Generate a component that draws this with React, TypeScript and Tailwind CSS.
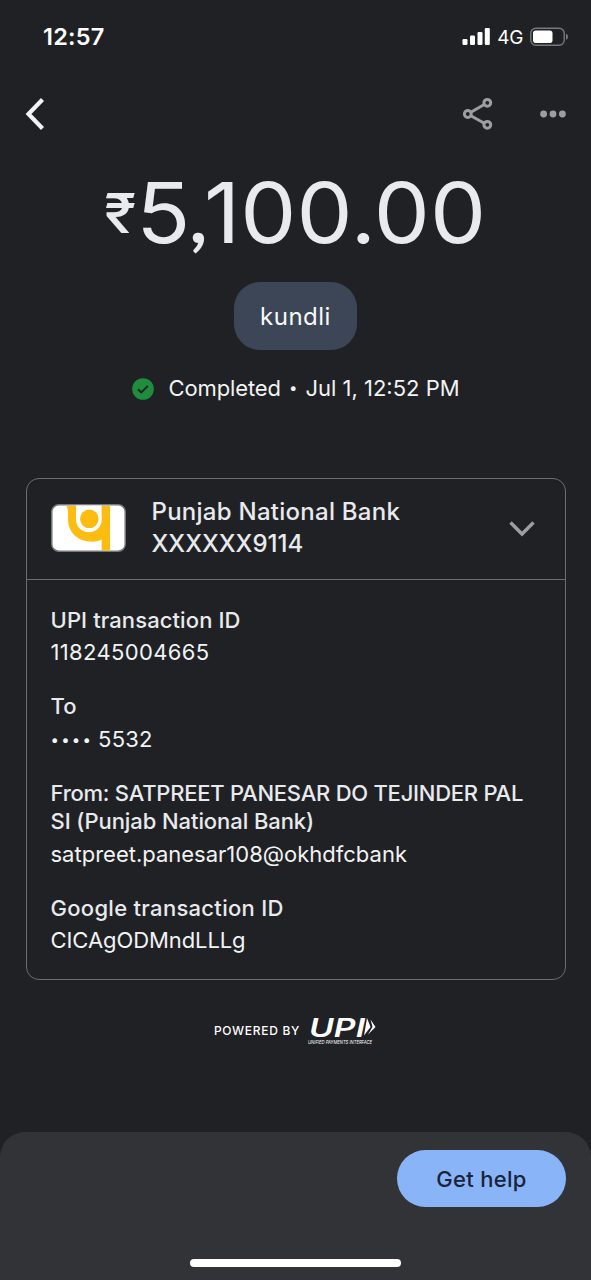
import React from 'react';

interface DetailProps {
  label: React.ReactNode;
  value: React.ReactNode;
}

const StatusBar: React.FC = () => (
  <div className="flex h-[74px] items-center justify-between pl-[43px] pr-[23px] text-white">
    <span className="text-[23.5px] font-semibold leading-none tracking-[0.2px]">12:57</span>
    <div className="flex items-center">
      <svg width="28" height="18" viewBox="0 0 28 18" fill="currentColor">
        <rect x="0.5" y="11" width="5" height="6" rx="1.2" />
        <rect x="8" y="7.5" width="5" height="9.5" rx="1.2" />
        <rect x="15.5" y="4" width="5" height="13" rx="1.2" />
        <rect x="22.8" y="0" width="5" height="17" rx="1.2" />
      </svg>
      <span className="ml-[7px] mt-px text-[19px] leading-none tracking-[-0.4px]">4G</span>
      <svg className="ml-[7px]" width="38" height="20" viewBox="0 0 38 20">
        <rect x="0.8" y="1.3" width="33.4" height="17" rx="5" fill="none" stroke="#77787b" strokeWidth="1.4" />
        <rect x="3" y="3.5" width="19.5" height="12.6" rx="2.8" fill="#fff" />
        <path d="M36 6.8c1.3.4 2 1.5 2 3s-.7 2.6-2 3z" fill="#77787b" />
      </svg>
    </div>
  </div>
);

const Header: React.FC = () => (
  <div className="flex h-20 items-center justify-between pl-[25px] pr-6">
    <svg width="20" height="34" viewBox="0 0 20 34" fill="none" stroke="#f1f3f4" strokeWidth="4.2">
      <path d="M17.5 2.5 3.5 17l14 14.5" />
    </svg>
    <div className="flex items-center gap-[47px]">
      <svg width="30" height="34" viewBox="0 0 30 34" fill="none" stroke="#9d9ea1" strokeWidth="3">
        <circle cx="4.8" cy="17" r="3.4" />
        <circle cx="24.3" cy="5.8" r="3.4" />
        <circle cx="24.3" cy="27.8" r="3.4" />
        <path d="M7.8 15.3 21.3 7.5M7.8 18.7l13.5 7.5" />
      </svg>
      <svg width="27" height="8" viewBox="0 0 27 8" fill="#9d9ea1">
        <circle cx="3.6" cy="4" r="3.4" />
        <circle cx="13" cy="4" r="3.4" />
        <circle cx="22.4" cy="4" r="3.4" />
      </svg>
    </div>
  </div>
);

const BankLogo: React.FC = () => (
  <svg className="-mt-0.5" width="75" height="48" viewBox="0 0 75 48">
    <rect x="0.8" y="0.8" width="73.4" height="46.4" rx="7" fill="#fff" stroke="#77787b" strokeWidth="1.5" />
    <path d="M15.5 2H59v44.4h-8.3V35.5c-3.5 1.8-7.5 2.5-12 2C26 36.5 17 28 17 15V6z" fill="#fdbd10" />
    <path d="M25 1.5h25.7v14a12.8 12.8 0 0 1-25.7 0z" fill="#fff" />
    <circle cx="38.3" cy="14.8" r="9.3" fill="#fdbd10" />
  </svg>
);

const Detail: React.FC<DetailProps> = ({ label, value }) => (
  <div>
    <div className="text-[22px] font-medium leading-[28.5px] text-[#e8eaed]">{label}</div>
    <div className="mt-1 text-[22px] leading-[29px] text-[#f1f3f4]">{value}</div>
  </div>
);

const UpiLogo: React.FC = () => (
  <svg className="overflow-visible" width="69" height="28" viewBox="0 0 69 28" fill="#fff">
    <text x="1" y="20.5" fontSize="25" fontWeight="600" fontStyle="italic" textLength="56" lengthAdjust="spacingAndGlyphs">UPI</text>
    <path d="M59 2 62.5 11 56 19.5z" />
    <path d="M62.5 3.5 67.5 11 60 18.5l4.5-7.5z" />
    <text x="0" y="27.5" fontSize="4.8" fontWeight="400" fontStyle="italic" textLength="64" lengthAdjust="spacingAndGlyphs">UNIFIED PAYMENTS INTERFACE</text>
  </svg>
);

export default function App() {
  return (
    <div className="flex h-[1280px] w-[591px] flex-col overflow-hidden bg-[#202124] font-['Inter',sans-serif] text-[#e8eaed]">
      <StatusBar />
      <Header />

      <main className="flex flex-1 flex-col items-center">
        <div className="mt-4 flex h-[86px] scale-x-[1.06] items-start justify-center">
          <span className="mt-[15px] text-[55px] font-medium leading-[56px]">₹</span>
          <span className="text-[84px] leading-[86px]">
            5<span className="-ml-px mr-[-3px] font-['Lato'] text-[72px] font-bold leading-none">,</span>100.00
          </span>
        </div>

        <div className="mt-[26px] flex h-[68px] w-[123px] items-center justify-center rounded-[26px] bg-[#3c4657] pt-0.5 text-2xl tracking-[0.5px] text-[#f8f9fa]">
          kundli
        </div>

        <div className="mt-[23px] flex h-[30px] items-center pl-px text-[22px] leading-[30px] text-[#f1f3f4]">
          <svg className="mr-[14px] mt-0.5" width="22" height="22" viewBox="0 0 22 22">
            <circle cx="11" cy="11" r="10.8" fill="#1e8e3e" />
            <path d="m6 11.3 3.3 3.2 6.6-6.6" fill="none" stroke="#202124" strokeWidth="1.9" />
          </svg>
          <span className="tracking-[-0.1px]">Completed</span>
          <span className="mx-2 text-[15px]">•</span>
          <span>Jul 1, 12:52 PM</span>
        </div>

        <section className="mt-[75px] h-[502px] w-[540px] rounded-[13px] border border-[#6b6d70]">
          <div className="flex h-[101px] items-center border-b border-[#6b6d70] pl-6 pr-[30px]">
            <BankLogo />
            <div className="-mt-0.5 ml-[26px] flex-1 text-2xl font-medium leading-8">
              <div className="tracking-[0.26px]">Punjab National Bank</div>
              <div>XXXXXX9114</div>
            </div>
            <svg width="26" height="16" viewBox="0 0 26 16" fill="none" stroke="#9d9ea1" strokeWidth="3.4">
              <path d="M1.5 1.5 13 13 24.5 1.5" />
            </svg>
          </div>
          <div className="flex flex-col gap-[25px] pl-6 pt-[25.5px]">
            <Detail
              label={<span className="tracking-[0.1px]">UPI transaction ID</span>}
              value={<span className="tracking-[0.35px]">118245004665</span>}
            />
            <Detail
              label="To"
              value={
                <div className="flex items-center">
                  <span className="mr-[5px] text-[15px] tracking-[2.2px]">••••</span>
                  <span className="tracking-[0.2px]">5532</span>
                </div>
              }
            />
            <Detail
              label={
                <>
                  <span className="tracking-[-0.25px]">From: SATPREET PANESAR DO TEJINDER PAL</span>
                  <br />
                  <span className="tracking-[-0.08px]">SI (Punjab National Bank)</span>
                </>
              }
              value="satpreet.panesar108@okhdfcbank"
            />
            <Detail
              label={<span className="tracking-[0.3px]">Google transaction ID</span>}
              value={<span className="tracking-[-0.08px]">CICAgODMndLLLg</span>}
            />
          </div>
        </section>

        <div className="mt-9 flex items-center gap-2">
          <span className="mt-0.5 text-xs font-medium tracking-[0.7px] text-white">POWERED BY</span>
          <UpiLogo />
        </div>
      </main>

      <footer className="flex h-[148px] flex-col items-end rounded-t-[25px] bg-[#323336] pt-[18px]">
        <button className="mr-[25px] h-[57px] w-[169px] rounded-full bg-[#8ab4f8] pt-0.5 text-[22px] font-medium tracking-[0.3px] text-[#17243b]">
          Get help
        </button>
        <div className="mb-[13px] mt-auto h-2 w-[211px] self-center rounded-full bg-white" />
      </footer>
    </div>
  );
}
